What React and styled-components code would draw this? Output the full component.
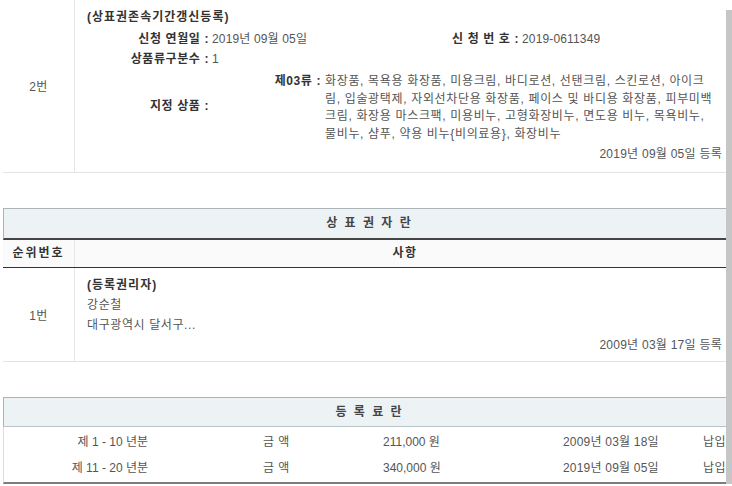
import React from "react";
import styled, { createGlobalStyle } from "styled-components";

const GlobalStyle = createGlobalStyle`
  html, body {
    margin: 0;
    padding: 0;
    overflow: hidden;
    background: #fff;
  }
  body {
    font-family: "Liberation Sans", "Noto Sans CJK KR", sans-serif;
    font-size: 12px;
    color: #555;
  }
`;

const Page = styled.div`
  width: 732px;
  padding-left: 3px;
`;

const RecordRow = styled.div`
  display: grid;
  grid-template-columns: 72px 1fr;
  border-bottom: 1px solid #e3e3e3;
`;

const NumCell = styled.div`
  display: flex;
  align-items: center;
  justify-content: center;
  border-right: 1px solid #e6e6e6;
  color: #555;
  letter-spacing: 0.5px;
`;

const BodyCell = styled.div`
  padding: ${(p) => p.$pad || "7px 13px 8px 12px"};
  line-height: 20px;
`;

const Title = styled.div`
  font-weight: bold;
  color: #333;
  letter-spacing: 1px;
`;

const Line = styled.div`
  color: #555;
  letter-spacing: 0.6px;
`;

const InfoGrid = styled.div`
  display: grid;
  grid-template-columns: 122px 190px 120px 1fr;
  margin-top: 2px;
  line-height: 20px;
`;

const Label = styled.div`
  text-align: right;
  font-weight: bold;
  color: #333;
  white-space: nowrap;
  letter-spacing: 0.6px;
  align-self: ${(p) => (p.$center ? "center" : "start")};
`;

const Value = styled.div`
  padding-left: 3px;
  color: #555;
  white-space: nowrap;
  letter-spacing: 0.15px;
`;

const Goods = styled.div`
  grid-column: 2 / -1;
  display: grid;
  grid-template-columns: 112px 1fr;
  margin-top: 4px;
  line-height: 17.7px;
`;

const GoodsList = styled.div`
  padding-left: 4px;
  letter-spacing: 0.66px;
  color: #555;
  white-space: nowrap;
`;

const Registered = styled.div`
  text-align: right;
  color: #555;
  letter-spacing: 0.25px;
`;

const Block = styled.section`
  margin-top: 35px;
`;

const SectionHead = styled.div`
  height: ${(p) => (p.$strong ? "29px" : "28px")};
  line-height: ${(p) => (p.$strong ? "29px" : "28px")};
  background: #edf2f5;
  border-top: 1px solid #aab4b9;
  border-left: 1px solid #aab4b9;
  border-bottom: ${(p) => (p.$strong ? "2px solid #444" : "1px solid #b8c4ca")};
  text-align: center;
  font-weight: bold;
  letter-spacing: 2px;
  color: #444;
`;

const ColHead = styled.div`
  display: grid;
  grid-template-columns: 72px 1fr;
  height: 27px;
  line-height: 27px;
  background: #fafafa;
  border-bottom: 1px solid #333;
  font-weight: bold;
  color: #333;
  text-align: center;
`;

const ColHeadCell = styled.div`
  border-right: ${(p) => (p.$divider ? "1px solid #e6e6e6" : "none")};
  letter-spacing: ${(p) => (p.$divider ? "2px" : "1.5px")};
`;

const FeeTable = styled.div`
  border-left: 1px solid #dcdcdc;
  border-bottom: 2px solid #7d7d7d;
  padding: 1px 0 2px;
`;

const FeeRow = styled.div`
  display: grid;
  grid-template-columns: 144px 235px 180px 140px 1fr;
  height: 26px;
  align-items: center;
  color: #555;
  white-space: nowrap;
`;

const Term = styled.div`
  text-align: right;
`;

const AmountLabel = styled.div`
  padding-left: 115px;
  letter-spacing: 0.5px;
`;

const Cell = styled.div`
  letter-spacing: ${(p) => p.$spacing || "0"};
`;

const Scrollbar = styled.div`
  position: fixed;
  top: 10px;
  right: 0;
  width: 6px;
  height: 474px;
  background: #c6c6c6;
`;

const goods = [
  "화장품, 목욕용 화장품, 미용크림, 바디로션, 선탠크림, 스킨로션, 아이크",
  "림, 입술광택제, 자외선차단용 화장품, 페이스 및 바디용 화장품, 피부미백",
  "크림, 화장용 마스크팩, 미용비누, 고형화장비누, 면도용 비누, 목욕비누,",
  "물비누, 샴푸, 약용 비누{비의료용}, 화장비누",
];

const fees = [
  { term: "제 1 - 10 년분", amount: "211,000 원", date: "2009년 03월 18일" },
  { term: "제 11 - 20 년분", amount: "340,000 원", date: "2019년 09월 05일" },
];

export default function App() {
  return (
    <Page>
      <GlobalStyle />
      <RecordRow>
        <NumCell>2번</NumCell>
        <BodyCell>
          <Title>(상표권존속기간갱신등록)</Title>
          <InfoGrid>
            <Label>신청 연월일 :</Label>
            <Value>2019년 09월 05일</Value>
            <Label>신 청 번 호 :</Label>
            <Value>2019-0611349</Value>
            <Label>상품류구분수 :</Label>
            <Value>1</Value>
            <div />
            <div />
            <Label $center>지정 상품 :</Label>
            <Goods>
              <Label>제03류 :</Label>
              <GoodsList>
                {goods.map((g) => (
                  <div key={g}>{g}</div>
                ))}
              </GoodsList>
            </Goods>
          </InfoGrid>
          <Registered>2019년 09월 05일 등록</Registered>
        </BodyCell>
      </RecordRow>

      <Block>
        <SectionHead $strong>상 표 권 자 란</SectionHead>
        <ColHead>
          <ColHeadCell $divider>순위번호</ColHeadCell>
          <ColHeadCell>사항</ColHeadCell>
        </ColHead>
        <RecordRow>
          <NumCell>1번</NumCell>
          <BodyCell $pad="7px 13px 6px 12px">
            <Title>(등록권리자)</Title>
            <Line>강순철</Line>
            <Line>대구광역시 달서구...</Line>
            <Registered>2009년 03월 17일 등록</Registered>
          </BodyCell>
        </RecordRow>
      </Block>

      <Block>
        <SectionHead>등 록 료 란</SectionHead>
        <FeeTable>
          {fees.map((f) => (
            <FeeRow key={f.term}>
              <Term>{f.term}</Term>
              <AmountLabel>금 액</AmountLabel>
              <Cell>{f.amount}</Cell>
              <Cell $spacing="0.2px">{f.date}</Cell>
              <Cell $spacing="0.5px">납입</Cell>
            </FeeRow>
          ))}
        </FeeTable>
      </Block>
      <Scrollbar />
    </Page>
  );
}
